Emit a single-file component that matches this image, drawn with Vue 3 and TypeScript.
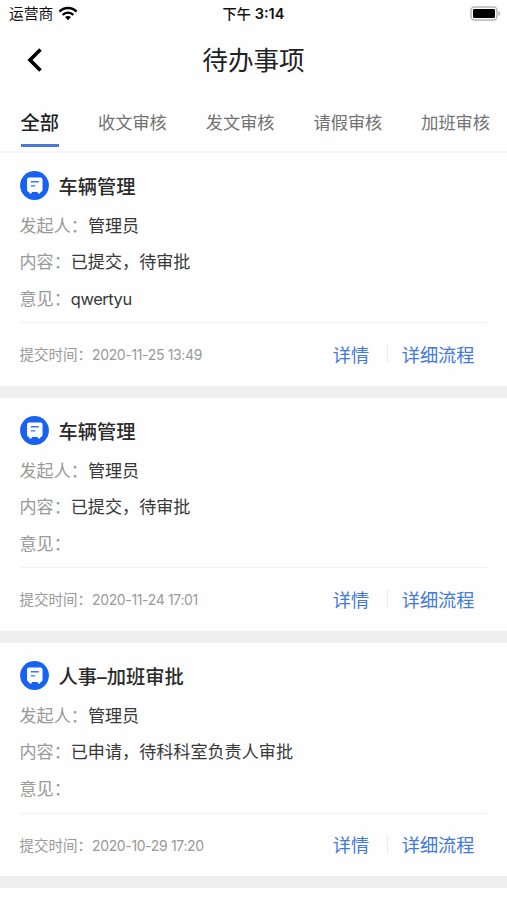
<script setup lang="ts">
import { ref } from 'vue'

interface TodoItem {
  id: number
  title: string
  initiator: string
  content: string
  opinion: string
  time: string
}

const tabs: string[] = ['全部', '收文审核', '发文审核', '请假审核', '加班审核']
const activeTab = ref<number>(0)

const items: TodoItem[] = [
  { id: 1, title: '车辆管理', initiator: '管理员', content: '已提交，待审批', opinion: 'qwertyu', time: '2020-11-25 13:49' },
  { id: 2, title: '车辆管理', initiator: '管理员', content: '已提交，待审批', opinion: '', time: '2020-11-24 17:01' },
  { id: 3, title: '人事–加班审批', initiator: '管理员', content: '已申请，待科科室负责人审批', opinion: '', time: '2020-10-29 17:20' },
]
</script>

<template>
  <div class="screen">
    <div class="status">
      <div class="carrier">
        <span>运营商</span>
        <svg class="wifi" viewBox="0 0 18 14" aria-hidden="true">
          <path d="M1 5.2C5.5.8 12.500.8 17 5.2" />
          <path d="M4 8.200c2.900-2.700 7.100-2.700 10 0" />
          <path class="wifi-dot" d="M6.200 10.300c1.600-1.400 4-1.400 5.600 0L9 13.300z" />
        </svg>
      </div>
      <div class="clock">下午 <span class="digits">3:14</span></div>
      <div class="power">
        <svg class="battery" viewBox="0 0 32 15" aria-hidden="true">
          <rect class="battery-shell" x="2" y="1" width="26" height="13" rx="3.500" />
          <rect x="4" y="3" width="22" height="9" rx="1.200" />
          <path class="battery-tip" d="M29.500 5.200c2 .6 2 4 0 4.600z" />
        </svg>
      </div>
    </div>

    <header class="nav">
      <button class="back" type="button" aria-label="返回">
        <svg viewBox="0 0 16 24" aria-hidden="true"><path d="M13.500 1.500 3 12l10.500 10.500" /></svg>
      </button>
      <h1>待办事项</h1>
    </header>

    <nav class="tabs">
      <button
        v-for="(tab, i) in tabs"
        :key="tab"
        type="button"
        class="tab"
        :class="{ active: i === activeTab }"
        @click="activeTab = i"
      >{{ tab }}</button>
    </nav>

    <main class="list">
      <article v-for="item in items" :key="item.id" class="card">
        <div class="head">
          <svg class="badge" viewBox="0 0 30 30" aria-hidden="true">
            <circle cx="15" cy="15" r="14.900" fill="#1762ee" />
            <path
              fill="#fff"
              d="M9.400 6.800h11.800c1.300 0 2.100.8 2.100 2.100v10.600c0 1.300-.8 2.100-2 2.100l-.7 1.600h-1.800l-.7-1.600h-5.600l-.7 1.600H10l-.7-1.600c-1.200 0-2-.8-2-2.100V8.900c0-1.300.8-2.100 2.100-2.100z"
            />
            <path d="M11.200 11.200h8.200M11.200 15.400h4.600" fill="none" stroke="#3474f0" stroke-width="1.500" />
          </svg>
          <h2>{{ item.title }}</h2>
        </div>
        <div class="row"><span class="label">发起人：</span><span>{{ item.initiator }}</span></div>
        <div class="row"><span class="label">内容：</span><span>{{ item.content }}</span></div>
        <div class="row"><span class="label">意见：</span><span class="opinion">{{ item.opinion }}</span></div>
        <div class="foot">
          <span class="time">提交时间：<span class="stamp">{{ item.time }}</span></span>
          <div class="actions">
            <a class="link">详情</a>
            <i class="sep"></i>
            <a class="link">详细流程</a>
          </div>
        </div>
      </article>
      <div class="next"></div>
    </main>
  </div>
</template>

<style>
body {
  margin: 0;
  background: #fefefe;
}
</style>

<style scoped>
.screen {
  width: 100%;
  height: 900px;
  overflow: hidden;
  box-sizing: border-box;
  background: #fefefe;
  color: #333;
  font-family: Inter, 'Noto Sans CJK SC', sans-serif;
  display: flex;
  flex-direction: column;
}
button {
  border: 0;
  padding: 0;
  background: none;
  font: inherit;
  color: inherit;
}
.status {
  flex: none;
  height: 28px;
  display: grid;
  grid-template-columns: 1fr auto 1fr;
  align-items: center;
  padding: 0 6px 0 9px;
  box-sizing: border-box;
  color: #111;
}
.carrier {
  display: flex;
  align-items: center;
  gap: 5px;
  font-size: 14.800px;
  line-height: 28px;
}
.wifi {
  width: 20px;
  height: 15px;
  margin-bottom: 2px;
  fill: none;
  stroke: #000;
  stroke-width: 2.300;
}
.wifi-dot {
  fill: #000;
  stroke: none;
}
.clock {
  margin-left: -3px;
  font-size: 14.200px;
  font-weight: 500;
  line-height: 28px;
}
.digits {
  font-size: 14.500px;
  font-weight: 600;
}
.power {
  display: flex;
  justify-content: flex-end;
}
.battery {
  width: 32px;
  height: 15px;
  margin-bottom: 1px;
}
.battery-shell {
  fill: #fff;
  stroke: #b4b4b4;
  stroke-width: 1.400;
}
.battery-tip {
  fill: #aaa;
}
.nav {
  flex: none;
  height: 64px;
  display: grid;
  grid-template-columns: 70px 1fr 70px;
  align-items: center;
}
.back {
  display: flex;
  padding-left: 27px;
}
.back svg {
  width: 16px;
  height: 24px;
  fill: none;
  stroke: #000;
  stroke-width: 3.600;
}
h1 {
  margin: 0;
  padding-top: 2px;
  text-align: center;
  font-size: 25.600px;
  font-weight: 400;
  line-height: 62px;
  color: #222;
}
.tabs {
  flex: none;
  height: 61px;
  box-sizing: border-box;
  border-bottom: 2px solid #f5f5f5;
  padding: 3px 17px 6px 20.500px;
  display: flex;
  justify-content: space-between;
}
.tab {
  box-sizing: border-box;
  border-bottom: 3px solid transparent;
  padding-top: 5px;
  font-size: 17.200px;
  line-height: 46px;
  height: 51.500px;
  color: #727272;
  white-space: nowrap;
}
.tab.active {
  border-bottom-color: #4878d8;
  font-size: 19.300px;
  font-weight: 500;
  color: #222;
}
.list {
  flex: 1;
  min-height: 0;
  display: flex;
  flex-direction: column;
  gap: 12px;
  background: #efefef;
}
.card {
  flex: none;
  height: 233.100px;
  box-sizing: border-box;
  padding: 12px 20px 0 19.500px;
  background: #fefefe;
}
.head {
  display: flex;
  align-items: center;
  gap: 10px;
  height: 41.600px;
}
.badge {
  width: 29px;
  height: 29px;
}
h2 {
  margin: 0;
  padding-top: 3px;
  font-size: 19.300px;
  font-weight: 500;
  line-height: 38px;
  color: #2a2a2a;
}
.row {
  height: 36.600px;
  line-height: 37px;
  font-size: 17.100px;
  white-space: nowrap;
  color: #383838;
}
.label {
  color: #999;
}
.opinion {
  font-size: 16.400px;
  letter-spacing: -0.400px;
}
.foot {
  display: flex;
  align-items: center;
  justify-content: space-between;
  height: 61px;
  margin-top: 6px;
  padding-right: 12.500px;
  border-top: 1px solid #f2f2f2;
}
.time {
  font-size: 14.500px;
  color: #9a9a9a;
}
.stamp {
  font-size: 14px;
  letter-spacing: -0.350px;
}
.actions {
  display: flex;
  align-items: center;
}
.link {
  font-size: 18.200px;
  color: #4279da;
}
.sep {
  width: 1px;
  height: 19px;
  margin: 0 14px 0 17.500px;
  background: #ebebeb;
}
.next {
  flex: 1;
  background: #fefefe;
}
</style>
